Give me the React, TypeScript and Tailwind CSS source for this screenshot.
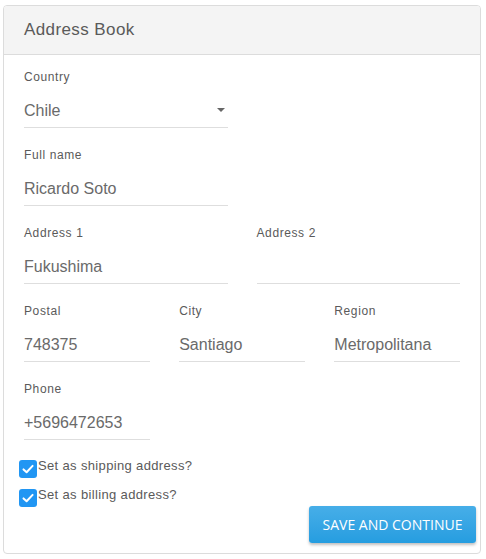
import React from "react";

interface FieldProps {
	label: string,
	value?: string,
	select?: boolean,
}

const Field = (props: FieldProps) => {
	return (
		<div className="h-[60px]">
			<label className="block h-4 text-[12px] leading-4 tracking-[0.6px] text-[#5a5a5a]">
				{props.label}
			</label>
			<div className="relative h-[43px] pt-[14px] border-b border-[#dedede]">
				<span className="block text-[16px] leading-6 text-[#6a6a6a]">
					{props.value}
				</span>
				{props.select && (
					<svg
						className="absolute right-[3px] top-[23px]"
						width="8"
						height="4"
						viewBox="0 0 8 4"
					>
						<path d="M0 0h8L4 4z" fill="#666" />
					</svg>
				)}
			</div>
		</div>
	)
}

const Check = (props: { label: string }) => {
	return (
		<label className="flex items-start h-[18px]">
			<span className="flex items-center justify-center w-[18px] h-[18px] rounded-[3px] bg-[#2196f3]">
				<svg width="14" height="14" viewBox="0 0 14 14" fill="none">
					<path
						d="M2.5 7.4 5.6 10.3 11.6 3.9"
						stroke="#fff"
						strokeWidth="2"
						strokeLinecap="round"
						strokeLinejoin="round"
					/>
				</svg>
			</span>
			<span className="ml-[1px] -mt-[2px] text-[13px] leading-4 tracking-[0.35px] text-[#5a5a5a]">
				{props.label}
			</span>
		</label>
	)
}

export default function App() {
	return (
		<div className="min-h-[559px] bg-white pt-[5px] pl-[3px] font-[family-name:'Liberation_Sans',Arial,sans-serif]">
			<div className="w-[478px] h-[549px] border border-[#dcdcdc] rounded-[4px] bg-white overflow-hidden">
				<header className="flex items-center h-[49px] px-5 bg-[#f4f4f4] border-b border-[#dcdcdc]">
					<h1 className="text-[17px] tracking-[0.4px] text-[#5a5a5a]">Address Book</h1>
				</header>
				<div className="px-5 pt-[14px]">
					<div className="grid grid-cols-2 gap-x-[29px] gap-y-[18px]">
						<Field label="Country" value="Chile" select />
						<div />
						<Field label="Full name" value="Ricardo Soto" />
						<div />
						<Field label="Address 1" value="Fukushima" />
						<Field label="Address 2" />
					</div>
					<div className="grid grid-cols-3 gap-x-[29.5px] gap-y-[18px] mt-[18px]">
						<Field label="Postal" value="748375" />
						<Field label="City" value="Santiago" />
						<Field label="Region" value="Metropolitana" />
						<Field label="Phone" value="+5696472653" />
					</div>
				</div>
				<div className="pl-[15px] pr-1 mt-[19px]">
					<div className="flex flex-col gap-[11px]">
						<Check label="Set as shipping address?" />
						<Check label="Set as billing address?" />
					</div>
					<div className="flex justify-end -mt-[1px]">
						<button
							type="button"
							className="w-[167px] h-[37px] rounded-[3px] bg-gradient-to-b from-[#46aee8] to-[#259de0] text-white text-[14px] font-[family-name:'Open_Sans',sans-serif] shadow-[0_2px_3px_rgba(0,0,0,0.25)]"
						>
							SAVE AND CONTINUE
						</button>
					</div>
				</div>
			</div>
		</div>
	)
}
